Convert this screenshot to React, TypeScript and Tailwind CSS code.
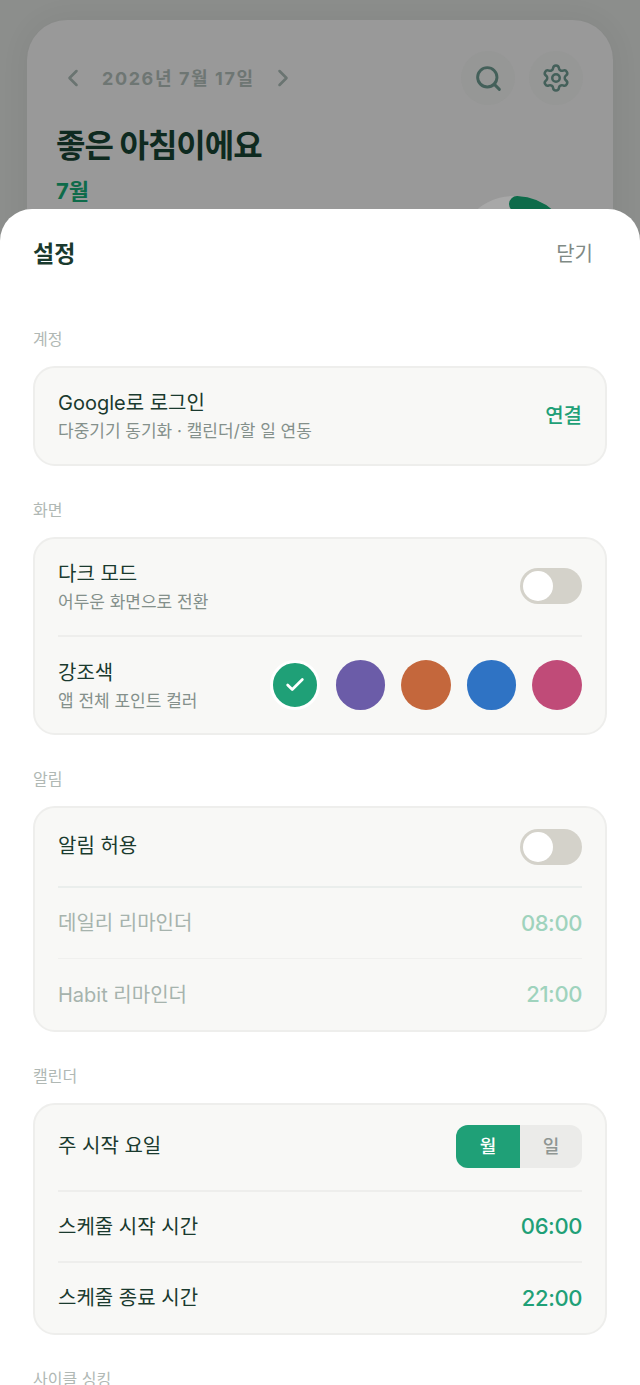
import React from 'react';
import { ChevronLeft, ChevronRight, Search, Settings, Check } from 'lucide-react';

const FONT = '[font-family:Inter,"Noto_Sans_CJK_KR",sans-serif]';

const Section: React.FC<{ label: string; className?: string; children?: React.ReactNode }> = ({ label, className, children }) => (
  <section className={className ?? 'mt-[34px]'}>
    <h3 className="text-[16px] leading-[20px] text-[#b0b8b4]">{label}</h3>
    {children && (
      <div className="mt-[17px] rounded-[22px] border-2 border-[#eeeeec] bg-[#f8f8f6] px-[23px]">{children}</div>
    )}
  </section>
);

const Toggle = () => (
  <div className="flex h-[36px] w-[62px] items-center rounded-full bg-[#d4d2ca] pl-[3px]">
    <div className="h-[30px] w-[30px] rounded-full bg-white" />
  </div>
);

const TitleBlock: React.FC<{ title: string; sub: string; className?: string }> = ({ title, sub, className }) => (
  <div className={className}>
    <div className="text-[20px] leading-[28px] text-[#1a3a2e]">{title}</div>
    <div className="mt-[3px] text-[17px] leading-[22px] text-[#84908b]">{sub}</div>
  </div>
);

const TimeRow: React.FC<{ label: string; value: string; dim?: boolean; className: string }> = ({ label, value, dim, className }) => (
  <div className={`flex items-center justify-between ${className}`}>
    <span className={`text-[20px] ${dim ? 'text-[#a6b3ad]' : 'text-[#1a3a2e]'}`}>{label}</span>
    <span className={`text-[22px] font-medium tracking-[-0.4px] ${dim ? 'text-[#9fd3bd]' : 'text-[#1fa077]'}`}>{value}</span>
  </div>
);

const colors = ['bg-[#6b5ca8]', 'bg-[#c4673c]', 'bg-[#2f73c4]', 'bg-[#c04b78]'];

export default function App() {
  return (
    <div className={`relative h-[1385px] w-[640px] overflow-hidden bg-[#8c8e8c] ${FONT}`}>
      {/* dimmed home screen behind the sheet */}
      <div className="pt-5 px-[27px]">
        <div className="h-[400px] rounded-[40px] bg-[#999999] px-[29px] pt-[34px] shadow-[0_0_30px_rgba(0,0,0,0.06)]">
          <div className="flex h-[48px] items-center">
            <ChevronLeft className="ml-[3px] h-[28px] w-[28px] text-[#6a7471]" strokeWidth={2.2} />
            <span className="ml-[15px] text-[18px] font-bold tracking-[1.6px] text-[#6e7673]">2026년 7월 17일</span>
            <ChevronRight className="ml-[14px] h-[28px] w-[28px] text-[#6a7471]" strokeWidth={2.2} />
            <div className="ml-auto flex gap-[14px] pr-[1px]">
              <div className="flex h-[54px] w-[54px] items-center justify-center rounded-full bg-[#969796]">
                <Search className="h-[29px] w-[29px] text-[#44605a]" strokeWidth={2.4} />
              </div>
              <div className="flex h-[54px] w-[54px] items-center justify-center rounded-full bg-[#969796]">
                <Settings className="h-[30px] w-[30px] text-[#44605a]" strokeWidth={2} />
              </div>
            </div>
          </div>
          <h1 className="mt-[22px] text-[32px] font-bold leading-[44px] tracking-[-1px] text-[#0e2a20]">좋은 아침이에요</h1>
          <p className="mt-[8px] text-[22px] font-bold leading-[30px] text-[#0e6b4a]">7월</p>
        </div>
      </div>

      {/* ring peeking over the sheet */}
      <svg className="absolute left-[455px] top-[190px] h-[40px] w-[120px]" viewBox="0 0 120 40" fill="none">
        <circle cx="59.5" cy="65" r="51" stroke="#a8a8a8" strokeWidth="16" />
        <path d="M62 14.06 A51 51 0 0 1 110 57" stroke="#0e6b4a" strokeWidth="16" strokeLinecap="round" />
      </svg>

      {/* settings sheet */}
      <div className="absolute inset-x-0 top-[209px] bottom-0 overflow-hidden rounded-t-[32px] bg-white px-[33px]">
        <div className="flex h-[90px] items-center justify-between pr-[14px]">
          <h2 className="text-[23px] font-bold text-[#1a3a2e]">설정</h2>
          <span className="text-[20px] text-[#7f8a85]">닫기</span>
        </div>

        <Section label="계정" className="mt-[30px]">
          <div className="flex h-[96px] items-center justify-between">
            <TitleBlock title="Google로 로그인" sub="다중기기 동기화 · 캘린더/할 일 연동" className="pb-[2px]" />
            <span className="text-[20px] font-medium text-[#1fa077]">연결</span>
          </div>
        </Section>

        <Section label="화면">
          <div className="flex h-[98px] items-center justify-between border-b-2 border-[#eeeeec] pb-[2px]">
            <TitleBlock title="다크 모드" sub="어두운 화면으로 전환" />
            <Toggle />
          </div>
          <div className="flex h-[96px] items-center justify-between">
            <TitleBlock title="강조색" sub="앱 전체 포인트 컬러" />
            <div className="flex items-center gap-[16px]">
              <div className="flex h-[49.6px] w-[49.6px] items-center justify-center rounded-full border-[3px] border-white bg-[#1fa077]">
                <Check className="h-[22px] w-[22px] text-white" strokeWidth={3} />
              </div>
              {colors.map((c) => (
                <div key={c} className={`h-[49.6px] w-[49.6px] rounded-full ${c}`} />
              ))}
            </div>
          </div>
        </Section>

        <Section label="알림">
          <div className="flex h-[80px] items-center justify-between border-b-2 border-[#eaeeec]">
            <span className="pb-[2px] text-[20px] text-[#1a3a2e]">알림 허용</span>
            <Toggle />
          </div>
          <TimeRow label="데일리 리마인더" value="08:00" dim className="h-[71px] border-b border-[#f0f0ee]" />
          <TimeRow label="Habit 리마인더" value="21:00" dim className="h-[71px]" />
        </Section>

        <Section label="캘린더">
          <div className="flex h-[87px] items-center justify-between border-b-2 border-[#eeeeec] pb-[2px]">
            <span className="pb-[2px] text-[20px] text-[#1a3a2e]">주 시작 요일</span>
            <div className="flex h-[43px] w-[126px] overflow-hidden rounded-[12px] bg-[#ebebe9] text-[18px] font-medium">
              <div className="flex w-[64px] items-center justify-center bg-[#1fa077] text-white">월</div>
              <div className="flex flex-1 items-center justify-center text-[#8f9693]">일</div>
            </div>
          </div>
          <TimeRow label="스케줄 시작 시간" value="06:00" className="h-[71px] border-b-2 border-[#eeeeec]" />
          <TimeRow label="스케줄 종료 시간" value="22:00" className="h-[70px]" />
        </Section>

        <Section label="사이클 싱킹" />
      </div>
    </div>
  );
}
